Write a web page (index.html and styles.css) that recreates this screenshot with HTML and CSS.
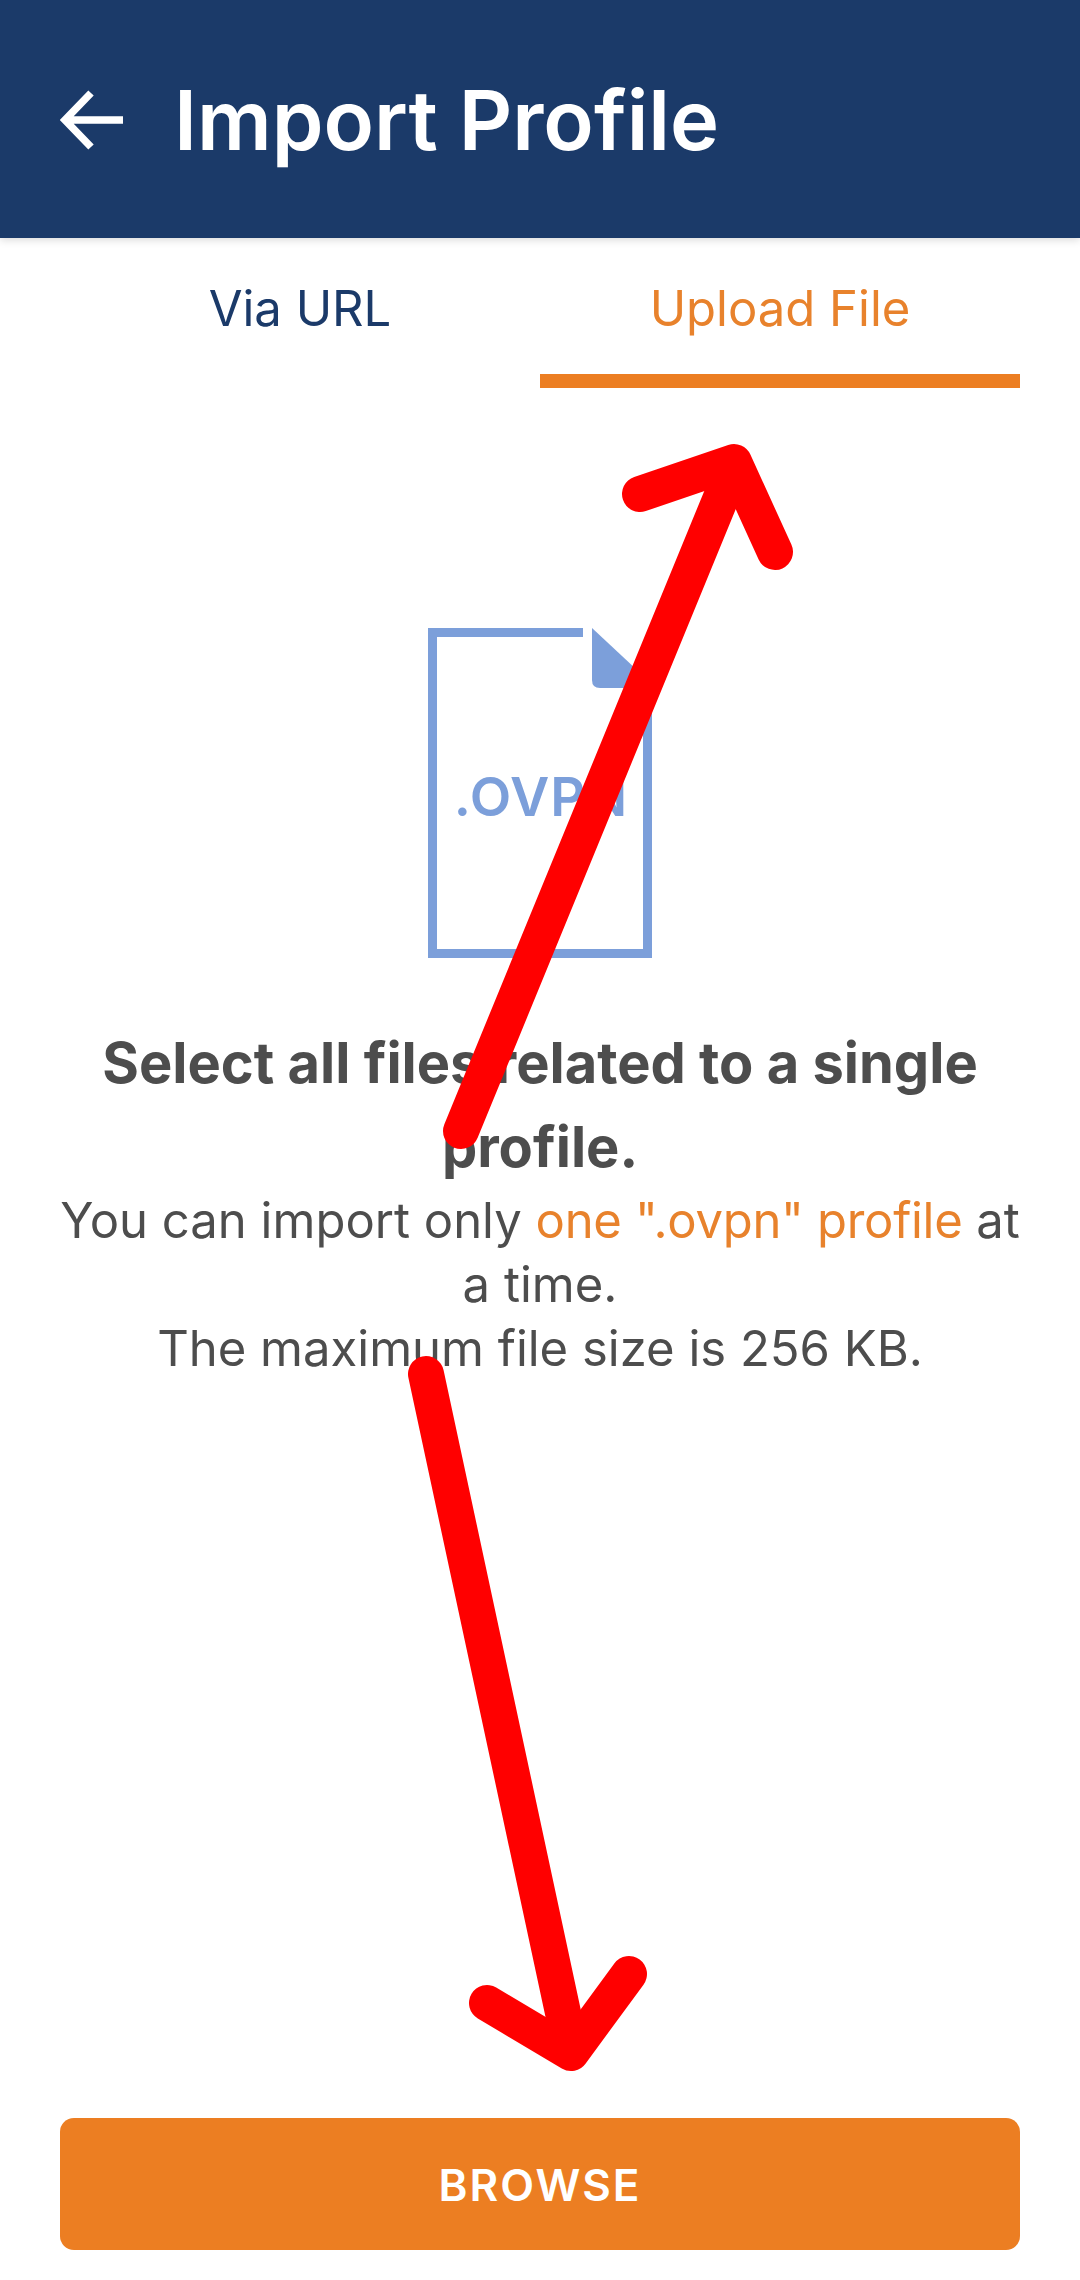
FILE: index.html
```html
<!DOCTYPE html>
<html lang="en">
<head>
  <meta charset="UTF-8" />
  <meta name="viewport" content="width=device-width, initial-scale=1.0"/>
  <title>Import Profile</title>
  <link rel="stylesheet" href="styles.css">
</head>

<body>
  <div class="page">
    <header class="app-bar">
      <svg class="back-icon" viewBox="0 0 64 64" width="64" height="64">
        <path d="M63 32H6M31 5L5 32l26 27" fill="none" stroke="#fff" stroke-width="7.5"/>
      </svg>
      <h1>Import Profile</h1>
    </header>

    <nav class="tabs">
      <div class="tab">Via URL</div>
      <div class="tab active">Upload File</div>
    </nav>

    <main class="content">
      <svg class="file-icon" viewBox="0 0 224 330" width="224" height="330">
        <path d="M155 4.500H4.500V325.500H219.500V72" fill="none" stroke="#7c9fda" stroke-width="9"/>
        <path d="M164 0L224 56V60H172Q164 60 164 52Z" fill="#7c9fda"/>
        <text class="file-label" x="113" y="188" text-anchor="middle">.OVPN</text>
      </svg>

      <h2>Select all files related to a single profile.</h2>
      <p>You can import only <span class="hl">one ".ovpn" profile</span> at a time.<br>The maximum file size is 256 KB.</p>
    </main>

    <button class="browse-btn">BROWSE</button>
  </div>

  <!-- red marks drawn on top of the screenshot -->
  <svg class="marks" viewBox="0 0 1080 2280" width="1080" height="2280">
    <g fill="none" stroke="#ff0000" stroke-width="36" stroke-linecap="round" stroke-linejoin="round">
      <path d="M461 1131L734 466"/>
      <path d="M640 494L734 462L775 552"/>
      <path d="M426 1374L571 2050"/>
      <path d="M487 2003L571 2053L629 1974"/>
    </g>
  </svg>
</body>
</html>
```

FILE: styles.css
```css
* {
  margin: 0;
  padding: 0;
  box-sizing: border-box;
  font-family: 'Inter', sans-serif;
}

body {
  background: #ffffff;
  position: relative;
}

.page {
  display: flex;
  flex-direction: column;
  height: 2280px;
  padding-bottom: 30px;
}

.app-bar {
  display: flex;
  align-items: center;
  gap: 50px;
  height: 238px;
  padding: 2px 0 0 60px;
  background: #1b3a69;
  box-shadow: 0 2px 8px rgba(0, 0, 0, 0.15);
}

.back-icon {
  flex: none;
}

.app-bar h1 {
  font-size: 83px;
  font-weight: 600;
  color: #ffffff;
}

.tabs {
  display: flex;
  padding: 0 60px;
}

.tab {
  flex: 1;
  height: 150px;
  padding-top: 41px;
  text-align: center;
  font-size: 49px;
  line-height: 60px;
  color: #1b3a69;
}

.tab.active {
  color: #e8822c;
  border-bottom: 14px solid #ec7e22;
}

.content {
  flex: 1;
  display: flex;
  flex-direction: column;
  align-items: center;
  padding: 240px 50px 0;
  text-align: center;
}

.file-label {
  font-size: 54px;
  font-weight: 600;
  letter-spacing: 1px;
  fill: #7c9fda;
}

.content h2 {
  margin-top: 63px;
  font-size: 56px;
  font-weight: 700;
  line-height: 84px;
  color: #4d4d4d;
}

.content p {
  font-size: 49px;
  line-height: 64px;
  color: #4d4d4d;
}

.hl {
  color: #e8822c;
  letter-spacing: -0.3px;
}

.browse-btn {
  height: 132px;
  margin: 0 60px;
  padding-top: 2px;
  border: none;
  border-radius: 14px;
  background: #ec7e22;
  color: #ffffff;
  font-size: 44px;
  font-weight: 600;
  letter-spacing: 2px;
}

.marks {
  position: absolute;
  top: 0;
  left: 0;
}
```
